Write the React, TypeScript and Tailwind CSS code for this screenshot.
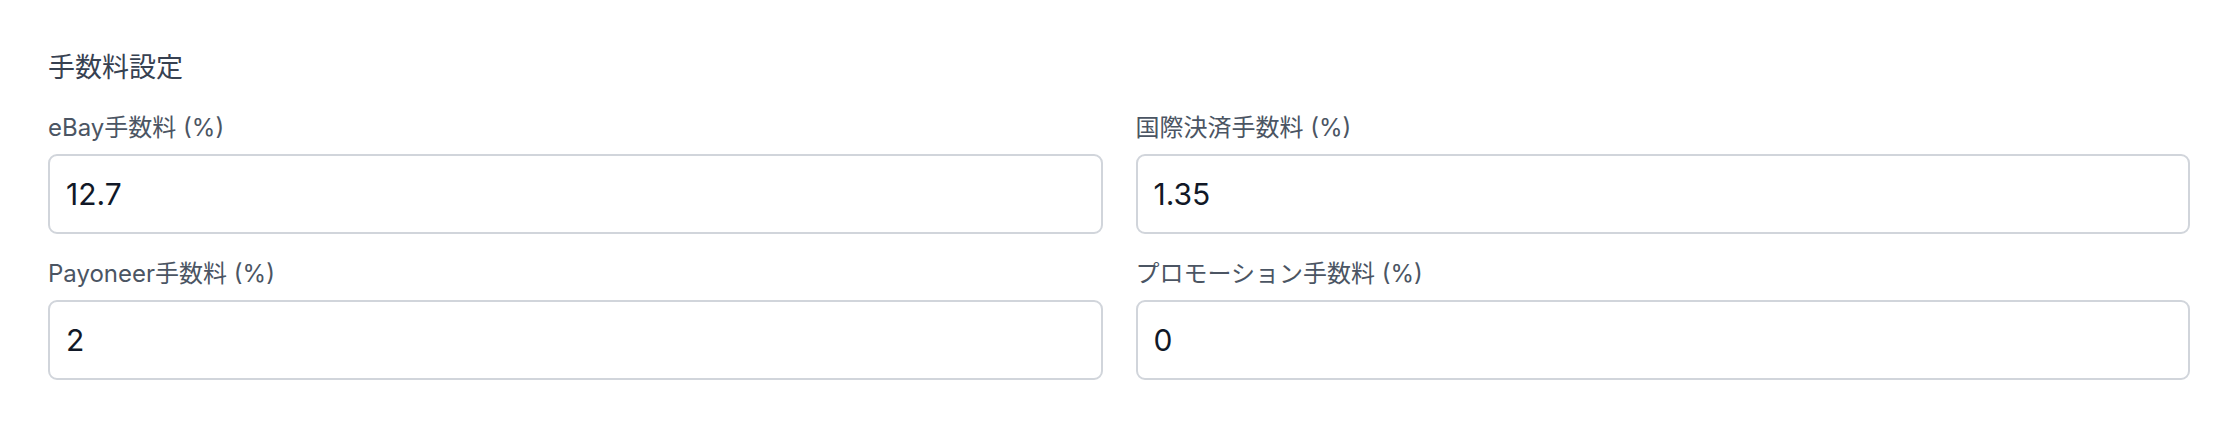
import React from "react";

const fees = [
  { label: "eBay手数料 (%)", value: "12.7" },
  { label: "国際決済手数料 (%)", value: "1.35" },
  { label: "Payoneer手数料 (%)", value: "2" },
  { label: "プロモーション手数料 (%)", value: "0" },
];

function FeeField({ label, value }: { label: string; value: string }) {
  return (
    <div className="flex flex-col">
      <label className="mb-[8px] text-[24px] leading-[36px] text-[#4b5563]">{label}</label>
      <input
        type="text"
        defaultValue={value}
        className="h-[80px] w-full rounded-[9px] border-2 border-[#d1d5db] bg-white px-[16px] text-[30px] text-[#111827] outline-none"
      />
    </div>
  );
}

export default function App() {
  return (
    <div
      className="min-h-[432px] w-full bg-white pl-[48px] pr-[50px] pt-[48px]"
      style={{ fontFamily: 'Inter, "Noto Sans CJK JP", sans-serif' }}
    >
      <h2 className="mb-[22px] text-[27px] leading-[40px] text-[#374151]">手数料設定</h2>
      <div className="grid grid-cols-2 gap-x-[33px] gap-y-[22px]">
        {fees.map((f) => (
          <FeeField key={f.label} label={f.label} value={f.value} />
        ))}
      </div>
    </div>
  );
}
